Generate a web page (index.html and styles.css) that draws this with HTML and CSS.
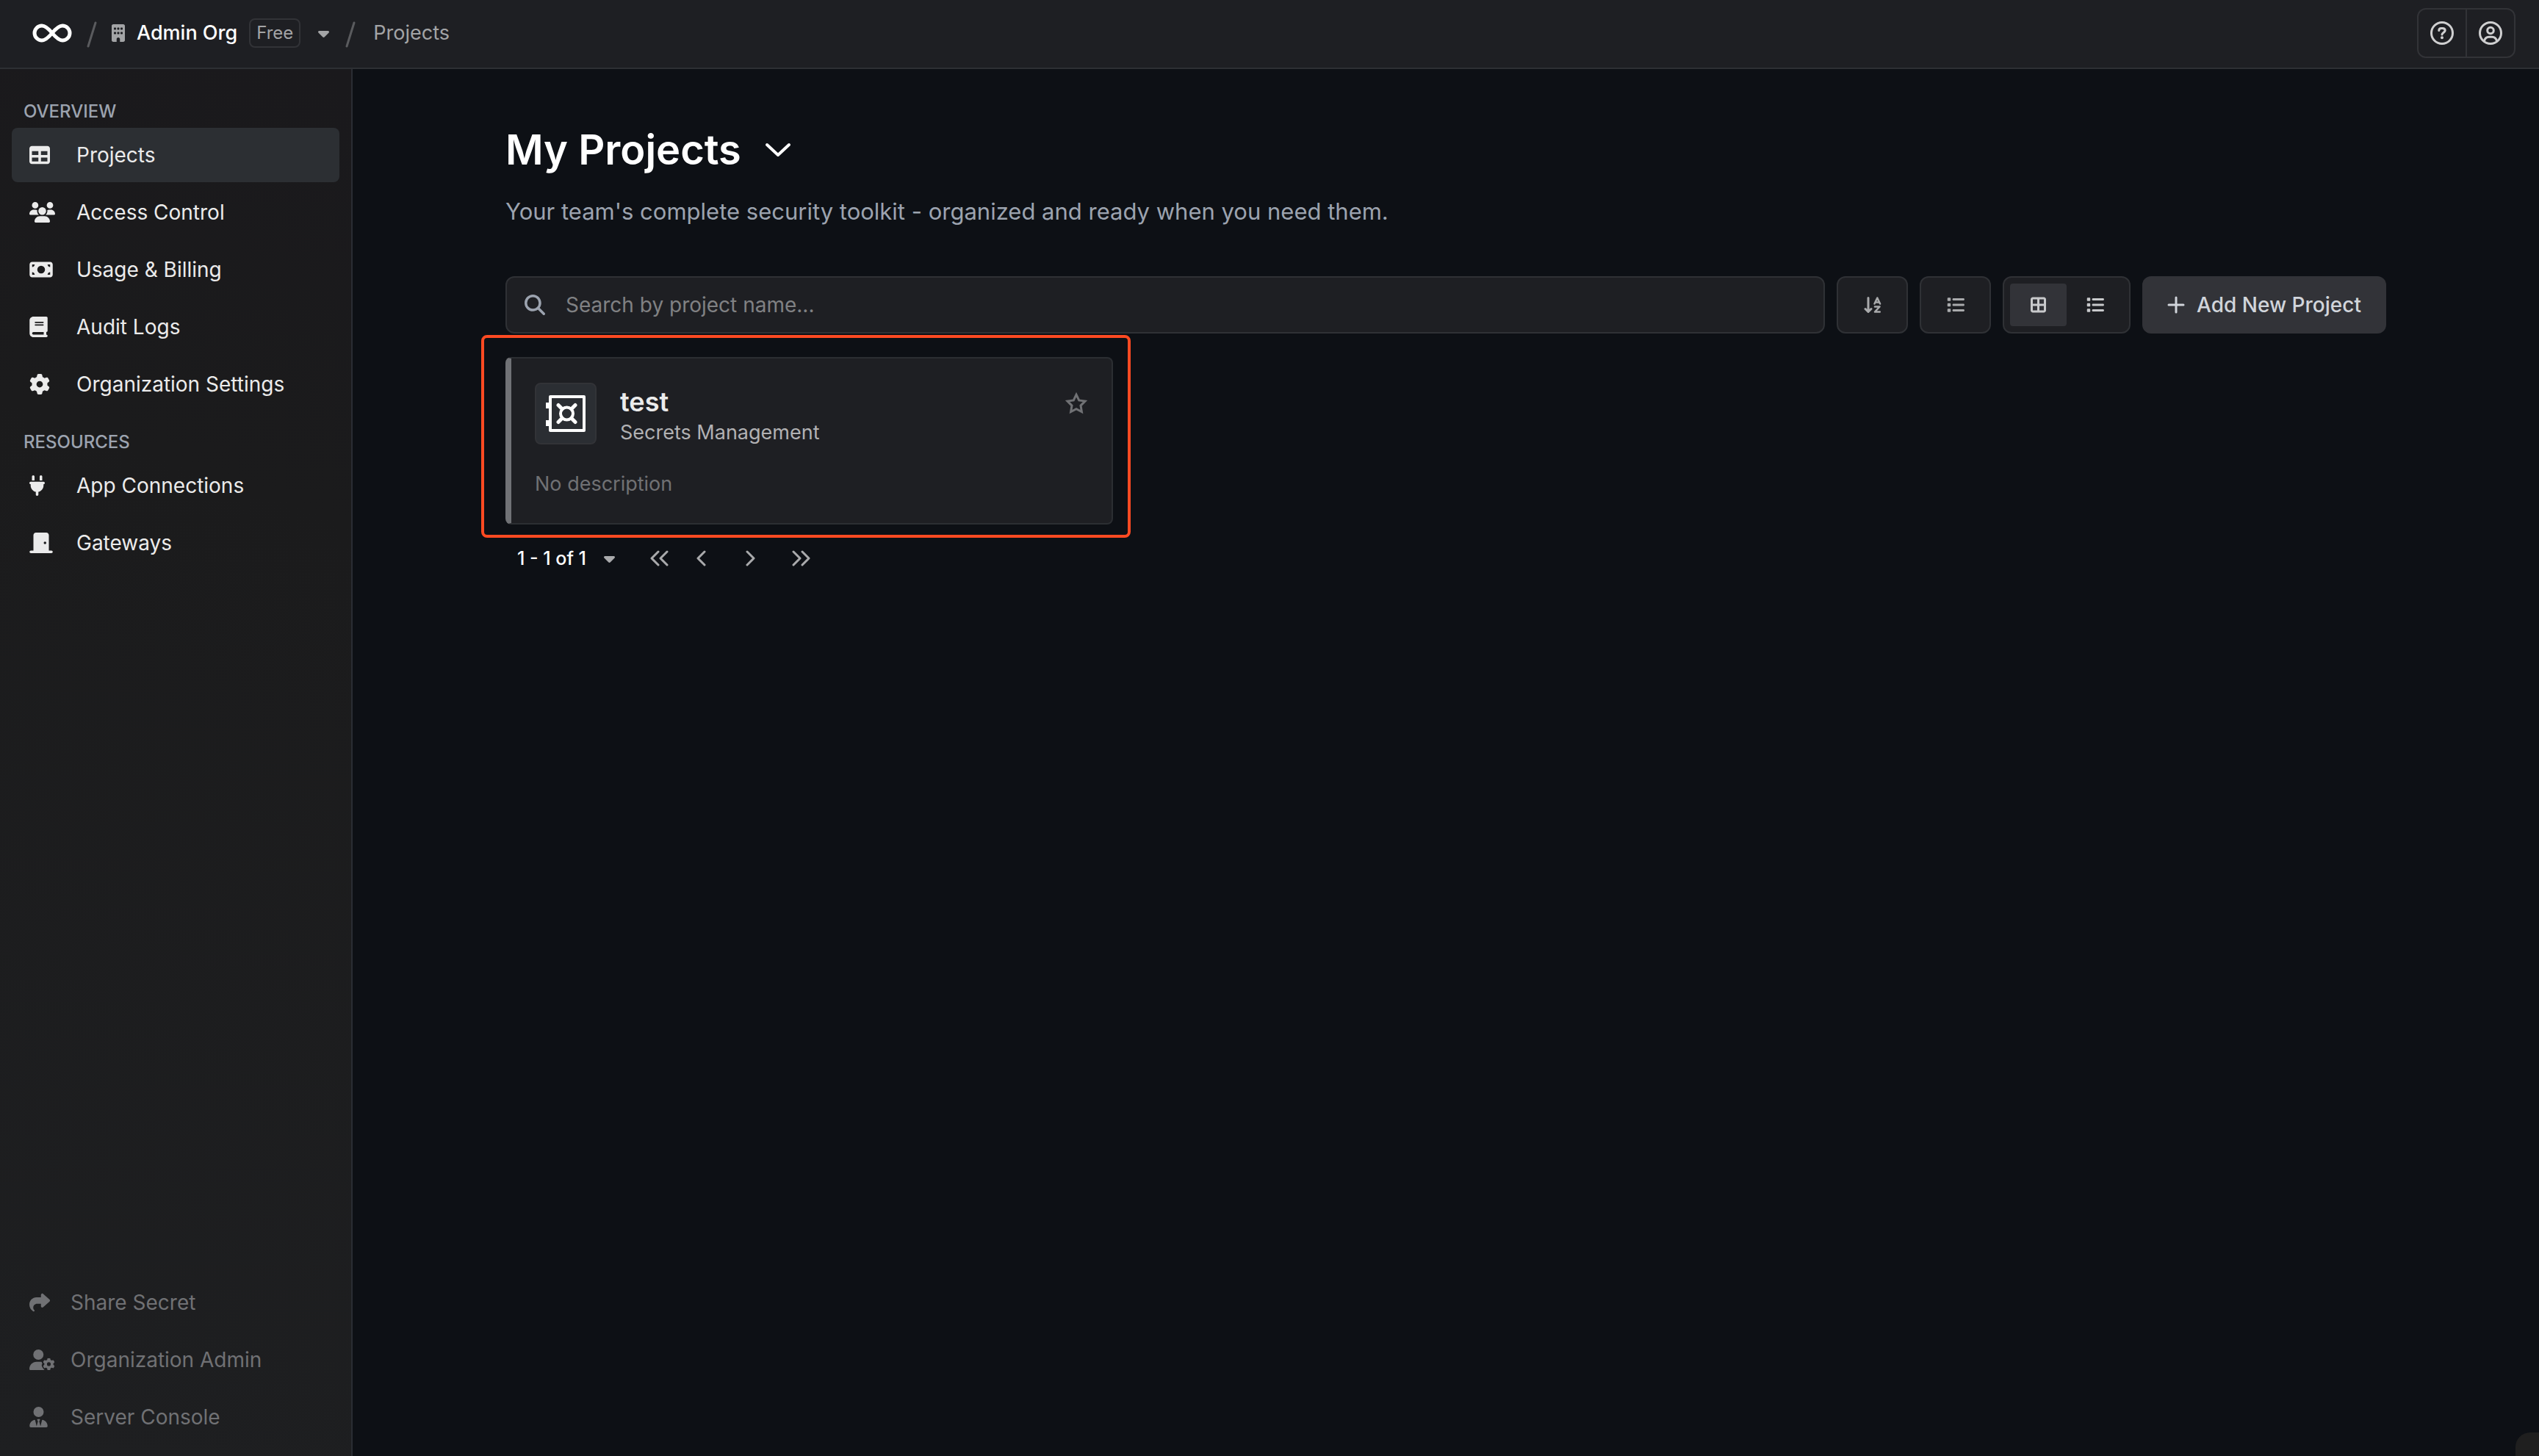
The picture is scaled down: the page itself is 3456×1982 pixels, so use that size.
FILE: index.html
```html
<!DOCTYPE html>
<html lang="en">
<head>
<meta charset="utf-8">
<title>Projects</title>
<link rel="stylesheet" href="styles.css">
</head>
<body>
<svg class="sprite" aria-hidden="true">
  <symbol id="caret" viewBox="0 0 320 512"><path d="M137.4 374.6c12.5 12.5 32.8 12.5 45.3 0l128-128c9.2-9.2 11.9-22.9 6.9-34.9s-16.6-19.8-29.6-19.8L32 192c-12.9 0-24.6 7.8-29.6 19.8s-2.2 25.7 6.9 34.9l128 128z"/></symbol>
  <symbol id="gear" viewBox="0 0 512 512"><path d="M495.9 166.6c3.2 8.7 .5 18.4-6.4 24.6l-43.3 39.4c1.1 8.3 1.7 16.8 1.7 25.4s-.6 17.1-1.7 25.4l43.3 39.4c6.9 6.2 9.6 15.9 6.4 24.6c-4.4 11.9-9.7 23.3-15.8 34.3l-4.7 8.1c-6.6 11-14 21.4-22.1 31.2c-5.9 7.2-15.7 9.6-24.5 6.8l-55.7-17.7c-13.4 10.3-28.2 18.9-44 25.4l-12.5 57.1c-2 9.1-9 16.3-18.2 17.8c-13.8 2.3-28 3.5-42.5 3.5s-28.7-1.2-42.5-3.5c-9.2-1.5-16.2-8.7-18.2-17.8l-12.5-57.1c-15.8-6.5-30.6-15.1-44-25.4L83.1 425.9c-8.8 2.8-18.6 .3-24.5-6.8c-8.1-9.8-15.5-20.2-22.1-31.2l-4.7-8.1c-6.1-11-11.4-22.4-15.8-34.3c-3.2-8.7-.5-18.4 6.4-24.6l43.3-39.4C64.6 273.1 64 264.6 64 256s.6-17.1 1.7-25.4L22.4 191.2c-6.9-6.2-9.6-15.9-6.4-24.6c4.4-11.9 9.7-23.3 15.8-34.3l4.7-8.1c6.6-11 14-21.4 22.1-31.2c5.9-7.2 15.7-9.6 24.5-6.8l55.7 17.7c13.4-10.3 28.2-18.9 44-25.4l12.5-57.1c2-9.1 9-16.3 18.2-17.8C227.3 1.2 241.5 0 256 0s28.7 1.2 42.5 3.5c9.2 1.5 16.2 8.7 18.2 17.8l12.5 57.1c15.8 6.5 30.6 15.1 44 25.4l55.7-17.7c8.8-2.8 18.6-.3 24.5 6.8c8.1 9.8 15.5 20.2 22.1 31.2l4.7 8.1c6.1 11 11.4 22.4 15.8 34.3zM256 336a80 80 0 1 0 0-160 80 80 0 1 0 0 160z"/></symbol>
  <symbol id="list" viewBox="0 0 512 512"><path d="M40 48C26.7 48 16 58.7 16 72v48c0 13.3 10.7 24 24 24H88c13.3 0 24-10.7 24-24V72c0-13.3-10.7-24-24-24H40zM192 64c-17.7 0-32 14.3-32 32s14.3 32 32 32H480c17.7 0 32-14.3 32-32s-14.3-32-32-32H192zm0 160c-17.7 0-32 14.3-32 32s14.3 32 32 32H480c17.7 0 32-14.3 32-32s-14.3-32-32-32H192zm0 160c-17.7 0-32 14.3-32 32s14.3 32 32 32H480c17.7 0 32-14.3 32-32s-14.3-32-32-32H192zM16 232v48c0 13.3 10.7 24 24 24H88c13.3 0 24-10.7 24-24V232c0-13.3-10.7-24-24-24H40c-13.3 0-24 10.7-24 24zM40 368c-13.3 0-24 10.7-24 24v48c0 13.3 10.7 24 24 24H88c13.3 0 24-10.7 24-24V392c0-13.3-10.7-24-24-24H40z"/></symbol>
</svg>

<header class="topbar">
  <nav class="crumbs" aria-label="Breadcrumb">
    <a class="logo" href="#" aria-label="Home"><svg width="54" height="26" viewBox="0 0 54 26" class="stroke"><path stroke-width="5" d="M27 13C22 7 18 3 13 3a10 10 0 0 0 0 20C18 23 22 19 27 13C32 7 36 3 41 3a10 10 0 0 1 0 20C36 23 32 19 27 13z"/></svg></a>
    <svg class="slash stroke" width="14" height="34" viewBox="0 0 14 34"><path stroke-width="3" d="M12 1L2 33"/></svg>
    <a class="org" href="#">
      <svg width="18" height="24" viewBox="0 0 384 512"><path d="M48 0C21.5 0 0 21.5 0 48V464c0 26.5 21.5 48 48 48h96V432c0-26.5 21.5-48 48-48s48 21.5 48 48v80h96c26.5 0 48-21.5 48-48V48c0-26.5-21.5-48-48-48H48zM64 240c0-8.8 7.2-16 16-16h32c8.8 0 16 7.2 16 16v32c0 8.8-7.2 16-16 16H80c-8.8 0-16-7.2-16-16V240zm112-16h32c8.8 0 16 7.2 16 16v32c0 8.8-7.2 16-16 16H176c-8.8 0-16-7.2-16-16V240c0-8.8 7.2-16 16-16zm80 16c0-8.8 7.2-16 16-16h32c8.8 0 16 7.2 16 16v32c0 8.8-7.2 16-16 16H272c-8.8 0-16-7.2-16-16V240zM80 96h32c8.8 0 16 7.2 16 16v32c0 8.8-7.2 16-16 16H80c-8.8 0-16-7.2-16-16V112c0-8.8 7.2-16 16-16zm80 16c0-8.8 7.2-16 16-16h32c8.8 0 16 7.2 16 16v32c0 8.8-7.2 16-16 16H176c-8.8 0-16-7.2-16-16V112zM272 96h32c8.8 0 16 7.2 16 16v32c0 8.8-7.2 16-16 16H272c-8.8 0-16-7.2-16-16V112c0-8.8 7.2-16 16-16z"/></svg>
      <span class="org-name">Admin Org</span>
      <span class="plan">Free</span>
    </a>
    <button class="org-switch" aria-label="Switch organization"><svg width="15" height="24"><use href="#caret"/></svg></button>
    <svg class="slash stroke" width="14" height="34" viewBox="0 0 14 34"><path stroke-width="3" d="M12 1L2 33"/></svg>
    <a class="here" href="#">Projects</a>
  </nav>
  <div class="account">
    <button aria-label="Help"><svg class="stroke" width="32" height="32" viewBox="0 0 32 32"><circle cx="16" cy="16" r="14.5" stroke-width="3"/><path stroke-width="3" d="M11.8 12.5c0-2 1.2-3 3-3h2c2 0 3.4 1.2 3.4 3 0 2.4-4.2 3-4.2 5.6"/><circle cx="16" cy="22.3" r="2" class="dot"/></svg></button>
    <button aria-label="Account"><svg class="stroke" width="32" height="32" viewBox="0 0 32 32"><circle cx="16" cy="16" r="14.5" stroke-width="3"/><circle cx="16" cy="12.5" r="4.3" stroke-width="3"/><path stroke-width="3" d="M7.5 27c.8-4 3.5-5.8 6.5-5.8h4c3 0 5.7 1.8 6.5 5.8"/></svg></button>
  </div>
</header>

<div class="shell">
  <aside class="sidebar">
    <nav class="menu" aria-label="Organization">
      <h2>OVERVIEW</h2>
      <a class="item active" href="#"><span class="ico"><svg width="28" height="28" viewBox="0 0 512 512"><path d="M64 256V160H224v96H64zm0 64H224v96H64V320zm224 96V320H448v96H288zM448 256H288V160H448v96zM64 32C28.7 32 0 60.7 0 96V416c0 35.3 28.7 64 64 64H448c35.3 0 64-28.7 64-64V96c0-35.3-28.7-64-64-64H64z"/></svg></span>Projects</a>
      <a class="item" href="#"><span class="ico"><svg width="35" height="28" viewBox="0 0 640 512"><path d="M144 0a80 80 0 1 1 0 160A80 80 0 1 1 144 0zM512 0a80 80 0 1 1 0 160A80 80 0 1 1 512 0zM0 298.7C0 239.8 47.8 192 106.7 192h42.7c15.9 0 31 3.5 44.6 9.7c-1.3 7.2-1.9 14.7-1.9 22.3c0 38.2 16.8 72.5 43.3 96c-.2 0-.4 0-.7 0H21.3C9.6 320 0 310.4 0 298.7zM405.3 320c-.2 0-.4 0-.7 0c26.6-23.5 43.3-57.8 43.3-96c0-7.6-.7-15-1.9-22.3c13.6-6.3 28.7-9.7 44.6-9.7h42.7C592.2 192 640 239.8 640 298.7c0 11.8-9.6 21.3-21.3 21.3H405.3zM224 224a96 96 0 1 1 192 0 96 96 0 1 1 -192 0zM128 485.3C128 411.7 187.7 352 261.3 352H378.7C452.3 352 512 411.7 512 485.3c0 14.7-11.9 26.7-26.7 26.7H154.7c-14.7 0-26.7-11.9-26.7-26.7z"/></svg></span>Access Control</a>
      <a class="item" href="#"><span class="ico"><svg width="32" height="28" viewBox="0 0 576 512"><path d="M64 64C28.7 64 0 92.7 0 128V384c0 35.3 28.7 64 64 64H512c35.3 0 64-28.7 64-64V128c0-35.3-28.7-64-64-64H64zm64 320H64V320c35.3 0 64 28.7 64 64zM64 192V128h64c0 35.3-28.7 64-64 64zM448 384c0-35.3 28.7-64 64-64v64H448zm64-192c-35.3 0-64-28.7-64-64h64v64zM288 160a96 96 0 1 1 0 192 96 96 0 1 1 0-192z"/></svg></span>Usage &amp; Billing</a>
      <a class="item" href="#"><span class="ico"><svg width="25" height="28" viewBox="0 0 448 512"><path d="M96 0C43 0 0 43 0 96V416c0 53 43 96 96 96H384h32c17.7 0 32-14.3 32-32s-14.3-32-32-32V384c17.7 0 32-14.3 32-32V32c0-17.7-14.3-32-32-32H384 96zm0 384H352v64H96c-17.7 0-32-14.3-32-32s14.3-32 32-32zm32-240c0-8.8 7.2-16 16-16H336c8.8 0 16 7.2 16 16s-7.2 16-16 16H144c-8.8 0-16-7.2-16-16zm16 48H336c8.8 0 16 7.2 16 16s-7.2 16-16 16H144c-8.8 0-16-7.2-16-16s7.2-16 16-16z"/></svg></span>Audit Logs</a>
      <a class="item" href="#"><span class="ico"><svg width="28" height="28"><use href="#gear"/></svg></span>Organization Settings</a>
      <h2 class="later">RESOURCES</h2>
      <a class="item" href="#"><span class="ico"><svg width="21" height="28" viewBox="0 0 384 512"><path d="M96 0C78.3 0 64 14.3 64 32v96h64V32c0-17.7-14.3-32-32-32zM288 0c-17.7 0-32 14.3-32 32v96h64V32c0-17.7-14.3-32-32-32zM32 160c-17.7 0-32 14.3-32 32s14.3 32 32 32v32c0 77.4 55 142 128 156.8V480c0 17.7 14.3 32 32 32s32-14.3 32-32V412.8C297 398 352 333.4 352 256V224c17.7 0 32-14.3 32-32s-14.3-32-32-32H32z"/></svg></span>App Connections</a>
      <a class="item" href="#"><span class="ico"><svg width="32" height="28" viewBox="0 0 576 512"><path d="M96 64c0-35.3 28.7-64 64-64H416c35.3 0 64 28.7 64 64V448h64c17.7 0 32 14.3 32 32s-14.3 32-32 32H432 144 32c-17.7 0-32-14.3-32-32s14.3-32 32-32H96V64zM384 288a32 32 0 1 0 0-64 32 32 0 1 0 0 64z"/></svg></span>Gateways</a>
    </nav>
    <nav class="menu muted" aria-label="Tools">
      <a class="item" href="#"><span class="ico"><svg width="28" height="28" viewBox="0 0 512 512"><path d="M307 34.8c-11.5 5.1-19 16.6-19 29.2v64H176C78.8 128 0 206.8 0 304C0 417.3 81.5 467.9 100.2 478.1c2.5 1.4 5.3 1.9 8.1 1.9c10.9 0 19.7-8.9 19.7-19.7c0-7.5-4.3-14.4-9.8-19.5C108.8 431.9 96 414.4 96 384c0-53 43-96 96-96h96v64c0 12.6 7.4 24.1 19 29.2s25 3 34.4-5.4l160-144c6.7-6.1 10.6-14.7 10.6-23.8s-3.8-17.7-10.6-23.8l-160-144c-9.4-8.5-22.9-10.6-34.4-5.4z"/></svg></span>Share Secret</a>
      <a class="item" href="#"><span class="ico"><svg width="35" height="28" viewBox="0 0 640 512"><path d="M224 0a128 128 0 1 1 0 256A128 128 0 1 1 224 0zM178.3 304h91.4c14 0 27 1.6 39 4.6c-4 18 5 34 19 43c-16 11-26 32-19 54c8 30 22 54 42 74c6 10 14 20 26 32H29.7C13.3 512 0 498.7 0 482.3C0 383.8 79.8 304 178.3 304z"/><svg x="334" y="214" width="300" height="300"><use href="#gear"/></svg></svg></span>Organization Admin</a>
      <a class="item" href="#"><span class="ico"><svg width="25" height="28" viewBox="0 0 448 512"><path d="M96 128a128 128 0 1 0 256 0A128 128 0 1 0 96 128zm94.5 200.2l18.6 31L175.8 483.1l-36-146.9c-2-8.1-9.8-13.4-17.9-11.3C51.9 342.4 0 405.8 0 481.3c0 17 13.8 30.7 30.7 30.7H417.3c17 0 30.7-13.8 30.7-30.7c0-75.5-51.9-138.9-121.9-156.4c-8.1-2-15.9 3.3-17.9 11.3l-36 146.9L238.9 359.2l18.6-31c6.4-10.7-1.3-24.2-13.7-24.2H204.3c-12.4 0-20.1 13.6-13.7 24.2z"/></svg></span>Server Console</a>
    </nav>
  </aside>

  <main class="main">
    <div class="content">
      <div class="title">
        <h1>My Projects</h1>
        <button aria-label="Change project view"><svg class="stroke" width="36" height="20" viewBox="0 0 36 20"><path stroke-width="4" d="M3 3l15 14L33 3"/></svg></button>
      </div>
      <p class="lead">Your team's complete security toolkit - organized and ready when you need them.</p>

      <div class="toolbar">
        <label class="search">
          <svg width="28" height="28" viewBox="0 0 512 512"><path d="M416 208c0 45.9-14.9 88.3-40 122.7L502.6 457.4c12.5 12.5 12.5 32.8 0 45.3s-32.8 12.5-45.3 0L330.7 376c-34.4 25.2-76.8 40-122.7 40C93.1 416 0 322.9 0 208S93.1 0 208 0S416 93.1 416 208zM208 352a144 144 0 1 0 0-288 144 144 0 1 0 0 288z"/></svg>
          <input type="text" placeholder="Search by project name..." aria-label="Search by project name">
        </label>
        <button class="tool" aria-label="Sort by name"><svg class="stroke" width="24" height="24" viewBox="0 0 24 24"><path stroke-width="3" d="M6 2.5v18M2 17.5l4 4 4-4"/><path stroke-width="2.5" d="M14.5 10.5l3.8-8 3.8 8M16 8.5h4.6M15 14.5h6.5l-6.5 7h6.8"/></svg></button>
        <button class="tool" aria-label="Filter by type"><svg width="24" height="24"><use href="#list"/></svg></button>
        <div class="views">
          <button class="on" aria-label="Grid view"><svg width="21" height="24" viewBox="0 0 448 512"><path d="M384 96V224H256V96H384zm0 192V416H256V288H384zM192 224H64V96H192V224zM64 288H192V416H64V288zM64 32C28.7 32 0 60.7 0 96V416c0 35.3 28.7 64 64 64H384c35.3 0 64-28.7 64-64V96c0-35.3-28.7-64-64-64H64z"/></svg></button>
          <button aria-label="List view"><svg width="24" height="24"><use href="#list"/></svg></button>
        </div>
        <button class="add"><svg class="stroke" width="24" height="24" viewBox="0 0 24 24"><path stroke-width="3" d="M12 2v20M2 12h20"/></svg>Add New Project</button>
      </div>

      <div class="grid">
        <div class="cell">
          <article class="card">
            <div class="card-head">
              <span class="badge"><svg class="stroke" width="54" height="54" viewBox="0 0 54 54"><path stroke-width="4" d="M6 4h46v46H6z"/><path class="dot" d="M0 12h6v8H0zM0 36h6v8H0z"/><circle cx="28.5" cy="27" r="8.5" stroke-width="4"/><path stroke-width="5" d="M22 20.5l-5-5M35 20.5l5-5M22 33.5l-5 5M35 33.5l5 5"/></svg></span>
              <div class="names"><h3>test</h3><p>Secrets Management</p></div>
              <button class="star" aria-label="Add to favourites"><svg class="stroke sharp" width="32" height="32" viewBox="0 0 32 32"><path stroke-width="3" d="M16 4.2l3.7 7.7 8.3 1.2-6 6 1.4 8.5L16 23.7l-7.4 3.9L10 19.1l-6-6 8.3-1.2z"/></svg></button>
            </div>
            <p class="desc">No description</p>
          </article>
          <div class="highlight"></div>
        </div>
      </div>

      <div class="pager">
        <button class="range">1 - 1 of 1<svg width="15" height="24"><use href="#caret"/></svg></button>
        <button aria-label="First page"><svg class="stroke" width="28" height="24" viewBox="0 0 28 24"><path stroke-width="3" d="M13 3l-9 9 9 9M25 3l-9 9 9 9"/></svg></button>
        <button aria-label="Previous page"><svg class="stroke" width="16" height="24" viewBox="0 0 16 24"><path stroke-width="3" d="M12 3l-9 9 9 9"/></svg></button>
        <button class="next" aria-label="Next page"><svg class="stroke" width="16" height="24" viewBox="0 0 16 24"><path stroke-width="3" d="M4 3l9 9-9 9"/></svg></button>
        <button class="last" aria-label="Last page"><svg class="stroke" width="28" height="24" viewBox="0 0 28 24"><path stroke-width="3" d="M3 3l9 9-9 9M15 3l9 9-9 9"/></svg></button>
      </div>
    </div>
  </main>
</div>
<div class="corner"></div>
</body>
</html>
```

FILE: styles.css
```css
* { box-sizing: border-box; }
body {
  margin: 0;
  min-height: 100vh;
  display: flex;
  flex-direction: column;
  background: #0d1015;
  color: #fff;
  font: 400 28px/40px Inter, "Liberation Sans", sans-serif;
}
h1, h2, h3, p { margin: 0; }
a { color: inherit; text-decoration: none; }
button {
  display: flex;
  align-items: center;
  justify-content: center;
  padding: 0;
  border: 0;
  background: none;
  color: inherit;
  font: inherit;
}
svg { display: block; flex: none; fill: currentColor; overflow: visible; }
.sprite { position: absolute; width: 0; height: 0; }
.stroke { fill: none; stroke: currentColor; stroke-linecap: round; stroke-linejoin: round; }
.sharp { stroke-linejoin: miter; }
.dot { fill: currentColor; stroke: none; }

/* Top bar */
.topbar {
  display: flex;
  align-items: center;
  justify-content: space-between;
  height: 94px;
  padding: 0 32px 2px 44px;
  background: #1e1f23;
  border-bottom: 2px solid #2d2f33;
}
.crumbs { display: flex; align-items: center; color: #a3a4a6; font-size: 27px; }
.logo { color: #fff; }
.slash { margin: 4px 20px 0; color: #5a5b5e; }
.org { display: flex; align-items: center; gap: 16px; }
.org-name { color: #fff; font-weight: 500; }
.plan {
  padding: 0 8px;
  border: 2px solid #323337;
  border-radius: 8px;
  font-size: 24px;
  line-height: 36px;
}
.org-switch { margin: 0 2px 0 24px; }
.here { margin-left: 4px; }
.account {
  display: flex;
  height: 68px;
  border: 2px solid #323337;
  border-radius: 12px;
  color: #cfcfd0;
}
.account button { width: 64px; }
.account button + button { width: 66px; border-left: 2px solid #323337; }

/* Sidebar */
.shell { display: flex; flex: 1; }
.sidebar {
  display: flex;
  flex-direction: column;
  justify-content: space-between;
  flex: none;
  width: 480px;
  padding: 36px 16px 16px;
  border-right: 2px solid #2a2d33;
  background: linear-gradient(200deg, #1a191c, #1b1b1c 30%, #1e1f21);
}
.menu { display: flex; flex-direction: column; gap: 4px; color: #ebebeb; }
.menu h2 {
  padding-left: 16px;
  margin-bottom: -4px;
  color: #9ca3af;
  font-size: 24px;
  font-weight: 500;
  line-height: 44px;
}
.menu .later { margin-top: 16px; }
.item {
  display: flex;
  align-items: center;
  height: 74px;
  padding-left: 24px;
  border-radius: 8px;
}
.active { background: #2c2f33; }
.ico { width: 64px; }
.muted { color: #707174; }
.muted .ico { width: 56px; }

/* Main */
.main { flex: 1; min-width: 0; padding: 74px 64px; }
.content { max-width: 2560px; margin: 0 auto; }
.title { display: flex; align-items: center; gap: 32px; }
.title h1 { font-size: 56px; font-weight: 600; line-height: 72px; }
.lead { margin-top: 24px; color: #9ca3af; font-size: 31px; line-height: 48px; }

.toolbar { display: flex; gap: 16px; height: 78px; margin-top: 64px; color: #a9aaac; }
.search, .tool, .views {
  border: 2px solid #2f3135;
  border-radius: 12px;
  background: #1e1f23;
}
.search {
  display: flex;
  flex: 1;
  align-items: center;
  gap: 28px;
  padding: 0 24px;
  color: #9ca3af;
}
.search input {
  flex: 1;
  min-width: 0;
  padding: 0;
  border: 0;
  outline: 0;
  background: none;
  color: #fff;
  font: inherit;
}
.search input::placeholder { color: #808183; opacity: 1; }
.tool { width: 97px; }
.views { display: flex; padding: 8px; color: #c8c9cb; }
.views button { width: 77px; border-radius: 4px; }
.views .on { background: #323338; }
.add {
  gap: 16px;
  width: 332px;
  border-radius: 12px;
  background: #323338;
  color: #d1d5db;
  font-weight: 500;
}

.grid { display: grid; grid-template-columns: repeat(3, 1fr); gap: 40px; margin-top: 32px; }
.cell { position: relative; }
.highlight {
  position: absolute;
  inset: -30px -24px -18px -33px;
  border: 4px solid #ff4a22;
  border-radius: 8px;
  pointer-events: none;
}
.card {
  min-height: 228px;
  padding: 33px 32px;
  border: 2px solid #2b2e32;
  border-left: 8px solid #707276;
  border-radius: 8px;
  background: #1e1f23;
  font-size: 27px;
}
.card-head { display: flex; gap: 32px; }
.badge {
  display: grid;
  place-items: center;
  width: 84px;
  height: 84px;
  border: 2px solid #323337;
  border-radius: 8px;
  background: #2b2e33;
}
.names { flex: 1; padding-top: 4px; }
.names h3 { color: #ebebeb; font-size: 36px; font-weight: 600; line-height: 44px; }
.names p { color: #b1b1b3; }
.star { align-self: flex-start; margin-top: 12px; color: #707174; }
.desc { margin-top: 30px; color: #707174; }

.pager { display: flex; align-items: center; height: 48px; margin-top: 22px; padding-left: 16px; color: #a9aaac; }
.pager button { margin-right: 36px; }
.pager .range { gap: 24px; margin-right: 46px; font-size: 25px; font-weight: 500; color: #fff; }
.range svg { color: #a9aaac; }
.pager .next { margin: 0 48px 0 14px; }

/* Docked widget peeking out of the corner */
.corner {
  position: fixed;
  right: 0;
  bottom: 0;
  width: 32px;
  height: 32px;
  border-top-left-radius: 20px;
  background: #1f1f1f;
}
```
